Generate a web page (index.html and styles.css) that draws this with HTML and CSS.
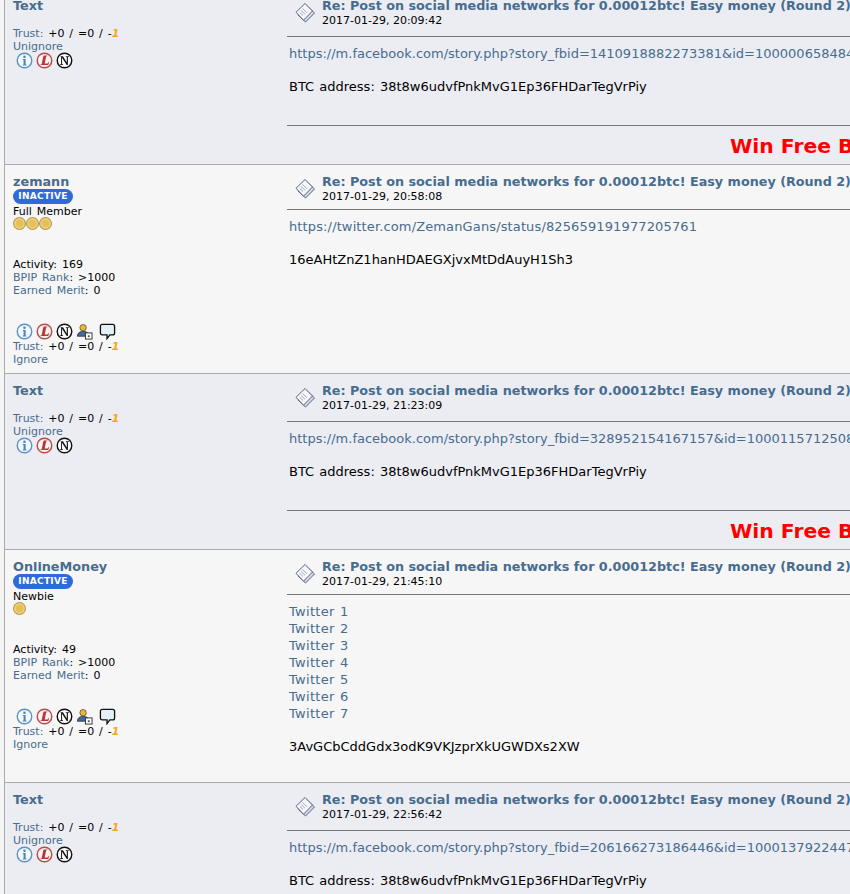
FILE: index.html
```html
<!DOCTYPE html>
<html lang="en">
<head>
<meta charset="utf-8">
<title>Thread</title>
<link rel="stylesheet" href="styles.css">
</head>
<body>
<svg class="defs" width="0" height="0" aria-hidden="true">
  <defs>
    <symbol id="i-info" viewBox="0 0 18 18"><circle cx="9" cy="9" r="7.7" fill="#f4f8fc" stroke="#5b93c4" stroke-width="1.5"/><circle cx="9" cy="5" r="1.4" fill="#4a86bc"/><path d="M7.3 7.5H10.2V13.2H11V14.2H7.2V13.2H8V8.5H7.3Z" fill="#4a86bc"/></symbol>
    <symbol id="i-lit" viewBox="0 0 18 18"><circle cx="9" cy="9" r="7.7" fill="#f8f2f2" stroke="#b84a4a" stroke-width="1.5"/><path d="M8.2 3.8H12L11.8 4.5H10.8L9.2 12.3H11.4C12.3 12.3 12.8 11.8 13.3 10.7H13.9L13 13.8H4.8L5 13.1H6L7.7 4.5H8Z" fill="#b23a3a"/></symbol>
    <symbol id="i-nm" viewBox="0 0 18 18"><circle cx="9" cy="9" r="7.7" fill="#fbfbfb" stroke="#111" stroke-width="1.5"/><path d="M5 4.5H7.4L11.4 11V5.4H10.4V4.5H13.6V5.4H12.6V13.8H11.4L6.4 6V12.9H7.4V13.8H4.4V12.9H5.4V5.4H5Z" fill="#111"/></symbol>
    <symbol id="i-user" viewBox="0 0 18 18"><circle cx="7.5" cy="5" r="3.4" fill="#e8b83a" stroke="#5a4a20" stroke-width=".8"/><path d="M1.5 14C1.5 10.5 4 9 7.5 9S13 10 13 12V14Z" fill="#3f6f9f" stroke="#223" stroke-width=".8"/><rect x="10" y="10.5" width="7" height="6.5" fill="#fff" stroke="#333"/><rect x="12.5" y="13" width="2" height="2" fill="#555"/></symbol>
    <symbol id="i-pm" viewBox="0 0 18 18"><path d="M3.5 1.5H14.5Q16.5 1.5 16.5 3.5V10.5Q16.5 12.5 14.5 12.5H11.5L8.5 16.5V12.5H3.5Q1.5 12.5 1.5 10.5V3.5Q1.5 1.5 3.5 1.5Z" fill="#e6f0f8" stroke="#111" stroke-width="1.4"/></symbol>
    <symbol id="i-post" viewBox="0 0 22 22"><path d="M11 4L19.5 12 10.5 21 3 14Z" fill="#d5dbee" stroke="#59627a"/><path d="M10 2.5L17.5 10 8.5 19.2 1 11.3Z" fill="#f4f6fb" stroke="#59627a"/><path d="M7.5 7.5L12 11.8M6 9.5L10 13.3M4.8 11.5L8 14.5" stroke="#a2abc0" fill="none"/></symbol>
    <symbol id="i-coin" viewBox="0 0 12 12"><circle cx="6" cy="6" r="5.5" fill="#ecd084" stroke="#b89a4a"/><circle cx="6" cy="6" r="3.4" fill="#e6bf55"/></symbol>
  </defs>
</svg>
<main class="page">

  <article class="row alt first ignored">
    <aside class="poster">
      <a class="name">Text</a>
      <div class="spacer-a"></div>
      <div class="line"><a>Trust:</a> +0 / =0 / -<b class="neg">1</b></div>
      <div class="line"><a>Unignore</a></div>
      <div class="icons"><svg><use href="#i-info"/></svg><svg><use href="#i-lit"/></svg><svg><use href="#i-nm"/></svg></div>
    </aside>
    <section class="post">
      <header class="head"><svg class="post-icon"><use href="#i-post"/></svg><div><a class="title">Re: Post on social media networks for 0.00012btc! Easy money (Round 2)</a><div class="date">2017-01-29, 20:09:42</div></div></header>
      <div class="body">
        <a>https://m.facebook.com/story.php?story_fbid=1410918882273381&amp;id=100000658484</a>
        <p>BTC address: 38t8w6udvfPnkMvG1Ep36FHDarTegVrPiy</p>
      </div>
      <div class="sig"><span class="win">Win Free Bitcoin</span></div>
    </section>
  </article>

  <article class="row member">
    <aside class="poster">
      <a class="name">zemann</a>
      <div class="badge">INACTIVE</div>
      <div class="line">Full Member</div>
      <div class="coins"><svg><use href="#i-coin"/></svg><svg><use href="#i-coin"/></svg><svg><use href="#i-coin"/></svg></div>
      <div class="line stat">Activity: 169</div>
      <div class="line"><a>BPIP Rank</a>: &gt;1000</div>
      <div class="line"><a>Earned Merit</a>: 0</div>
      <div class="icons far"><svg><use href="#i-info"/></svg><svg><use href="#i-lit"/></svg><svg><use href="#i-nm"/></svg><svg><use href="#i-user"/></svg><svg class="pm"><use href="#i-pm"/></svg></div>
      <div class="line"><a>Trust:</a> +0 / =0 / -<b class="neg">1</b></div>
      <div class="line"><a>Ignore</a></div>
    </aside>
    <section class="post">
      <header class="head"><svg class="post-icon"><use href="#i-post"/></svg><div><a class="title">Re: Post on social media networks for 0.00012btc! Easy money (Round 2)</a><div class="date">2017-01-29, 20:58:08</div></div></header>
      <div class="body">
        <a class="tw">https://twitter.com/ZemanGans/status/825659191977205761</a>
        <p>16eAHtZnZ1hanHDAEGXjvxMtDdAuyH1Sh3</p>
      </div>
    </section>
  </article>

  <article class="row alt ignored">
    <aside class="poster">
      <a class="name">Text</a>
      <div class="spacer-a"></div>
      <div class="line"><a>Trust:</a> +0 / =0 / -<b class="neg">1</b></div>
      <div class="line"><a>Unignore</a></div>
      <div class="icons"><svg><use href="#i-info"/></svg><svg><use href="#i-lit"/></svg><svg><use href="#i-nm"/></svg></div>
    </aside>
    <section class="post">
      <header class="head"><svg class="post-icon"><use href="#i-post"/></svg><div><a class="title">Re: Post on social media networks for 0.00012btc! Easy money (Round 2)</a><div class="date">2017-01-29, 21:23:09</div></div></header>
      <div class="body">
        <a>https://m.facebook.com/story.php?story_fbid=328952154167157&amp;id=1000115712508</a>
        <p>BTC address: 38t8w6udvfPnkMvG1Ep36FHDarTegVrPiy</p>
      </div>
      <div class="sig"><span class="win">Win Free Bitcoin</span></div>
    </section>
  </article>

  <article class="row member tall">
    <aside class="poster">
      <a class="name">OnlineMoney</a>
      <div class="badge">INACTIVE</div>
      <div class="line">Newbie</div>
      <div class="coins"><svg><use href="#i-coin"/></svg></div>
      <div class="line stat">Activity: 49</div>
      <div class="line"><a>BPIP Rank</a>: &gt;1000</div>
      <div class="line"><a>Earned Merit</a>: 0</div>
      <div class="icons far"><svg><use href="#i-info"/></svg><svg><use href="#i-lit"/></svg><svg><use href="#i-nm"/></svg><svg><use href="#i-user"/></svg><svg class="pm"><use href="#i-pm"/></svg></div>
      <div class="line"><a>Trust:</a> +0 / =0 / -<b class="neg">1</b></div>
      <div class="line"><a>Ignore</a></div>
    </aside>
    <section class="post">
      <header class="head"><svg class="post-icon"><use href="#i-post"/></svg><div><a class="title">Re: Post on social media networks for 0.00012btc! Easy money (Round 2)</a><div class="date">2017-01-29, 21:45:10</div></div></header>
      <div class="body">
        <a class="block">Twitter 1</a><a class="block">Twitter 2</a><a class="block">Twitter 3</a><a class="block">Twitter 4</a><a class="block">Twitter 5</a><a class="block">Twitter 6</a><a class="block">Twitter 7</a>
        <p>3AvGCbCddGdx3odK9VKJzprXkUGWDXs2XW</p>
      </div>
    </section>
  </article>

  <article class="row alt ignored">
    <aside class="poster">
      <a class="name">Text</a>
      <div class="spacer-a"></div>
      <div class="line"><a>Trust:</a> +0 / =0 / -<b class="neg">1</b></div>
      <div class="line"><a>Unignore</a></div>
      <div class="icons"><svg><use href="#i-info"/></svg><svg><use href="#i-lit"/></svg><svg><use href="#i-nm"/></svg></div>
    </aside>
    <section class="post">
      <header class="head"><svg class="post-icon"><use href="#i-post"/></svg><div><a class="title">Re: Post on social media networks for 0.00012btc! Easy money (Round 2)</a><div class="date">2017-01-29, 22:56:42</div></div></header>
      <div class="body">
        <a>https://m.facebook.com/story.php?story_fbid=206166273186446&amp;id=1000137922447</a>
        <p>BTC address: 38t8w6udvfPnkMvG1Ep36FHDarTegVrPiy</p>
      </div>
    </section>
  </article>

</main>
</body>
</html>
```
FILE: styles.css
```css
html, body {
  margin: 0;
  height: 894px;
  overflow: hidden;
  background: #f5f5f5;
}
body {
  font-family: "DejaVu Sans", Verdana, sans-serif;
  color: #000;
}
.defs { display: block; height: 0; }
.page {
  margin-left: 4px;
  border-left: 1px solid #aaa;
  white-space: nowrap;
}
a { color: #476c8e; }
.row {
  display: flex;
  height: 208px;
  border-bottom: 1px solid #aaa;
  background: #f6f6f6;
  overflow: hidden;
}
.row.alt { background: #ecedf3; }
.row.first { margin-top: -11px; }
.row.ignored { height: 175px; }
.row.tall { height: 232px; }
.poster {
  flex: 0 0 274px;
  box-sizing: border-box;
  padding: 9px 0 0 8px;
  font-size: 11px;
  line-height: 13px;
  word-spacing: 1.4px;
}
.name {
  display: block;
  font-size: 12.8px;
  font-weight: bold;
  line-height: 15px;
}
.spacer-a { height: 14px; }
.line { height: 13px; }
.neg { color: #f5a623; font-style: italic; }
.badge {
  width: 60px;
  height: 15px;
  margin-bottom: 1px;
  border-radius: 8px;
  background: #2f6bd8;
  color: #fff;
  font-size: 9px;
  font-weight: bold;
  line-height: 15px;
  text-align: center;
  letter-spacing: .3px;
}
.coins { display: flex; height: 15px; margin-top: -1px; }
.coins svg { width: 13px; height: 13px; }
.stat { margin-top: 26px; }
.icons { display: flex; gap: 3px; padding-left: 3px; height: 18px; margin-top: -1px; }
.icons svg { width: 17px; height: 17px; }
.icons.far { margin-top: 26px; height: 17px; }
.icons svg.pm { margin-left: 3px; }
.post {
  flex: 0 0 auto;
  width: 620px;
  padding-top: 6px;
  margin-left: 8px;
  box-sizing: border-box;
}
.head {
  display: flex;
  gap: 5px;
  padding: 0 0 7px 8px;
  border-bottom: 1px solid #777;
  box-sizing: border-box;
  height: 42px;
}
.member .head { height: 39px; }
.post-icon { width: 22px; height: 22px; margin-top: 6px; flex: none; }
.title {
  display: block;
  font-size: 12.75px;
  font-weight: bold;
  line-height: 16px;
  margin-top: 3px;
}
.date { font-size: 11px; line-height: 14px; }
.body {
  padding: 8px 0 0 2px;
  font-size: 13px;
  line-height: 17px;
  height: 80px;
  word-spacing: 1px;
}
.body p { margin: 16px 0 0; }
.block { display: block; letter-spacing: .3px; }
.tw { letter-spacing: .13px; }
.sig {
  border-top: 1px solid #777;
  padding-top: 6px;
  height: 30px;
  display: flex;
  padding-left: 443px;
}
.win {
  color: #f00;
  font-size: 20.3px;
  font-weight: bold;
  line-height: 28px;
}
```
